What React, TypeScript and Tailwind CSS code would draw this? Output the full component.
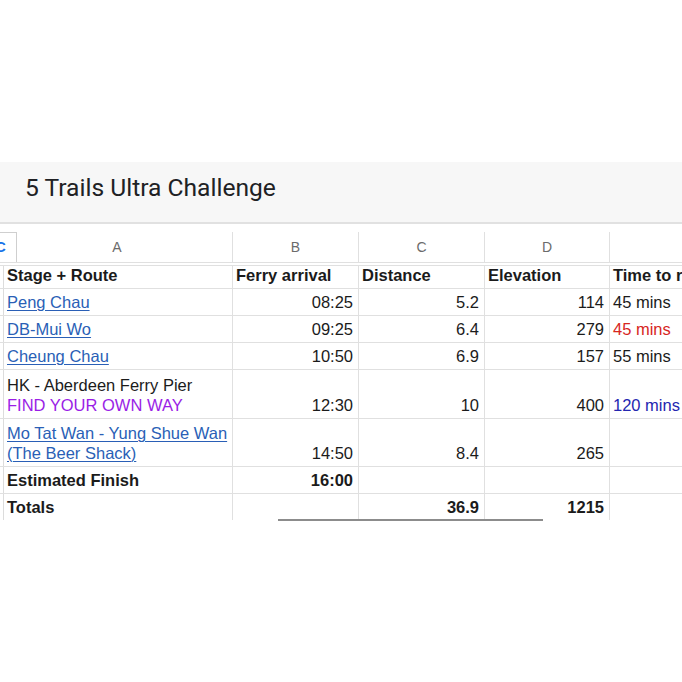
import type { ReactNode } from "react";

type Cell = {
  text?: ReactNode;
  align?: "left" | "right";
  bold?: boolean;
  color?: string;
};

const LINK = "text-[#2a5fb6] underline underline-offset-2 decoration-1";

function Row({
  h,
  cells,
  top = false,
  last = false,
}: {
  h: string;
  cells: Cell[];
  top?: boolean;
  last?: boolean;
}) {
  const widths = ["w-[229px]", "w-[126px]", "w-[126px]", "w-[125px]", "flex-1"];
  return (
    <div
      className={`flex ${h} ${top ? "border-t" : ""} ${last ? "" : "border-b"} border-[#e0e0e0]`}
    >
      <div className="w-[4px] shrink-0 border-r border-[#dcdcdc]" />
      {cells.map((c, i) => (
        <div
          key={i}
          className={`${widths[i]} shrink-0 flex flex-col justify-end pb-[3px] px-[3px] leading-[20px] whitespace-nowrap overflow-hidden ${
            i < 4 ? "border-r border-[#e0e0e0]" : ""
          } ${c.align === "right" ? "items-end pr-[5px]" : "items-start"} ${
            c.bold ? "font-bold" : ""
          } ${c.color ?? "text-[#1b1b1b]"}`}
        >
          {c.text}
        </div>
      ))}
    </div>
  );
}

export default function App() {
  return (
    <div className="w-[682px] h-[682px] bg-white overflow-hidden font-['Liberation_Sans',Arial,sans-serif] text-[16.5px]">
      <div className="h-[162px]" />

      {/* Sheet title bar */}
      <div className="h-[62px] bg-[#f7f7f7] border-b-2 border-[#e1e1e1] pl-[25px] pt-[14px]">
        <h1 className="font-['Roboto',sans-serif] text-[24.6px] leading-[24px] text-[#202124]">
          5 Trails Ultra Challenge
        </h1>
      </div>

      <div className="h-[8px]" />

      {/* Column letters */}
      <div className="flex h-[31px] border-b border-[#e0e0e0] text-[14px] text-[#6b6b6b]">
        <div className="w-[17px] shrink-0 border border-l-0 border-b-0 border-[#cfcfcf] bg-white overflow-hidden flex items-center">
          <span className="-ml-[5px] text-[15px] font-bold text-[#1a73e8]">C</span>
        </div>
        <div className="w-[216px] shrink-0 border-r border-[#e0e0e0] flex items-center justify-center pr-[15px]">
          A
        </div>
        <div className="w-[126px] shrink-0 border-r border-[#e0e0e0] flex items-center justify-center">
          B
        </div>
        <div className="w-[126px] shrink-0 border-r border-[#e0e0e0] flex items-center justify-center">
          C
        </div>
        <div className="w-[125px] shrink-0 border-r border-[#e0e0e0] flex items-center justify-center">
          D
        </div>
        <div className="flex-1" />
      </div>

      <div className="h-[2px]" />

      <div className="relative">
        <Row
          h="h-[24px]"
          top
          cells={[
            { text: "Stage + Route", bold: true },
            { text: "Ferry arrival", bold: true },
            { text: "Distance", bold: true },
            { text: "Elevation", bold: true },
            { text: "Time to reach", bold: true },
          ]}
        />
        <Row
          h="h-[27px]"
          cells={[
            { text: <span className={LINK}>Peng Chau</span> },
            { text: "08:25", align: "right" },
            { text: "5.2", align: "right" },
            { text: "114", align: "right" },
            { text: "45 mins" },
          ]}
        />
        <Row
          h="h-[27px]"
          cells={[
            { text: <span className={LINK}>DB-Mui Wo</span> },
            { text: "09:25", align: "right" },
            { text: "6.4", align: "right" },
            { text: "279", align: "right" },
            { text: "45 mins", color: "text-[#d7261e]" },
          ]}
        />
        <Row
          h="h-[27px]"
          cells={[
            { text: <span className={LINK}>Cheung Chau</span> },
            { text: "10:50", align: "right" },
            { text: "6.9", align: "right" },
            { text: "157", align: "right" },
            { text: "55 mins" },
          ]}
        />
        <Row
          h="h-[49px]"
          cells={[
            {
              text: (
                <>
                  <span>HK - Aberdeen Ferry Pier</span>
                  <span className="text-[#9a1ee6]">FIND YOUR OWN WAY</span>
                </>
              ),
            },
            { text: "12:30", align: "right" },
            { text: "10", align: "right" },
            { text: "400", align: "right" },
            { text: "120 mins", color: "text-[#2426b0]" },
          ]}
        />
        <Row
          h="h-[48px]"
          cells={[
            {
              text: (
                <>
                  <span className={LINK}>Mo Tat Wan - Yung Shue Wan</span>
                  <span className={LINK}>(The Beer Shack)</span>
                </>
              ),
            },
            { text: "14:50", align: "right" },
            { text: "8.4", align: "right" },
            { text: "265", align: "right" },
            { text: "" },
          ]}
        />
        <Row
          h="h-[27px]"
          cells={[
            { text: "Estimated Finish", bold: true },
            { text: "16:00", align: "right", bold: true },
            { text: "" },
            { text: "" },
            { text: "" },
          ]}
        />
        <Row
          h="h-[26px]"
          last
          cells={[
            { text: "Totals", bold: true },
            { text: "" },
            { text: "36.9", align: "right", bold: true },
            { text: "1215", align: "right", bold: true },
            { text: "" },
          ]}
        />
        {/* scrollbar thumb */}
        <div className="absolute left-[278px] bottom-[-1px] w-[265px] h-[2px] bg-[#8c8c8c]" />
      </div>
    </div>
  );
}
